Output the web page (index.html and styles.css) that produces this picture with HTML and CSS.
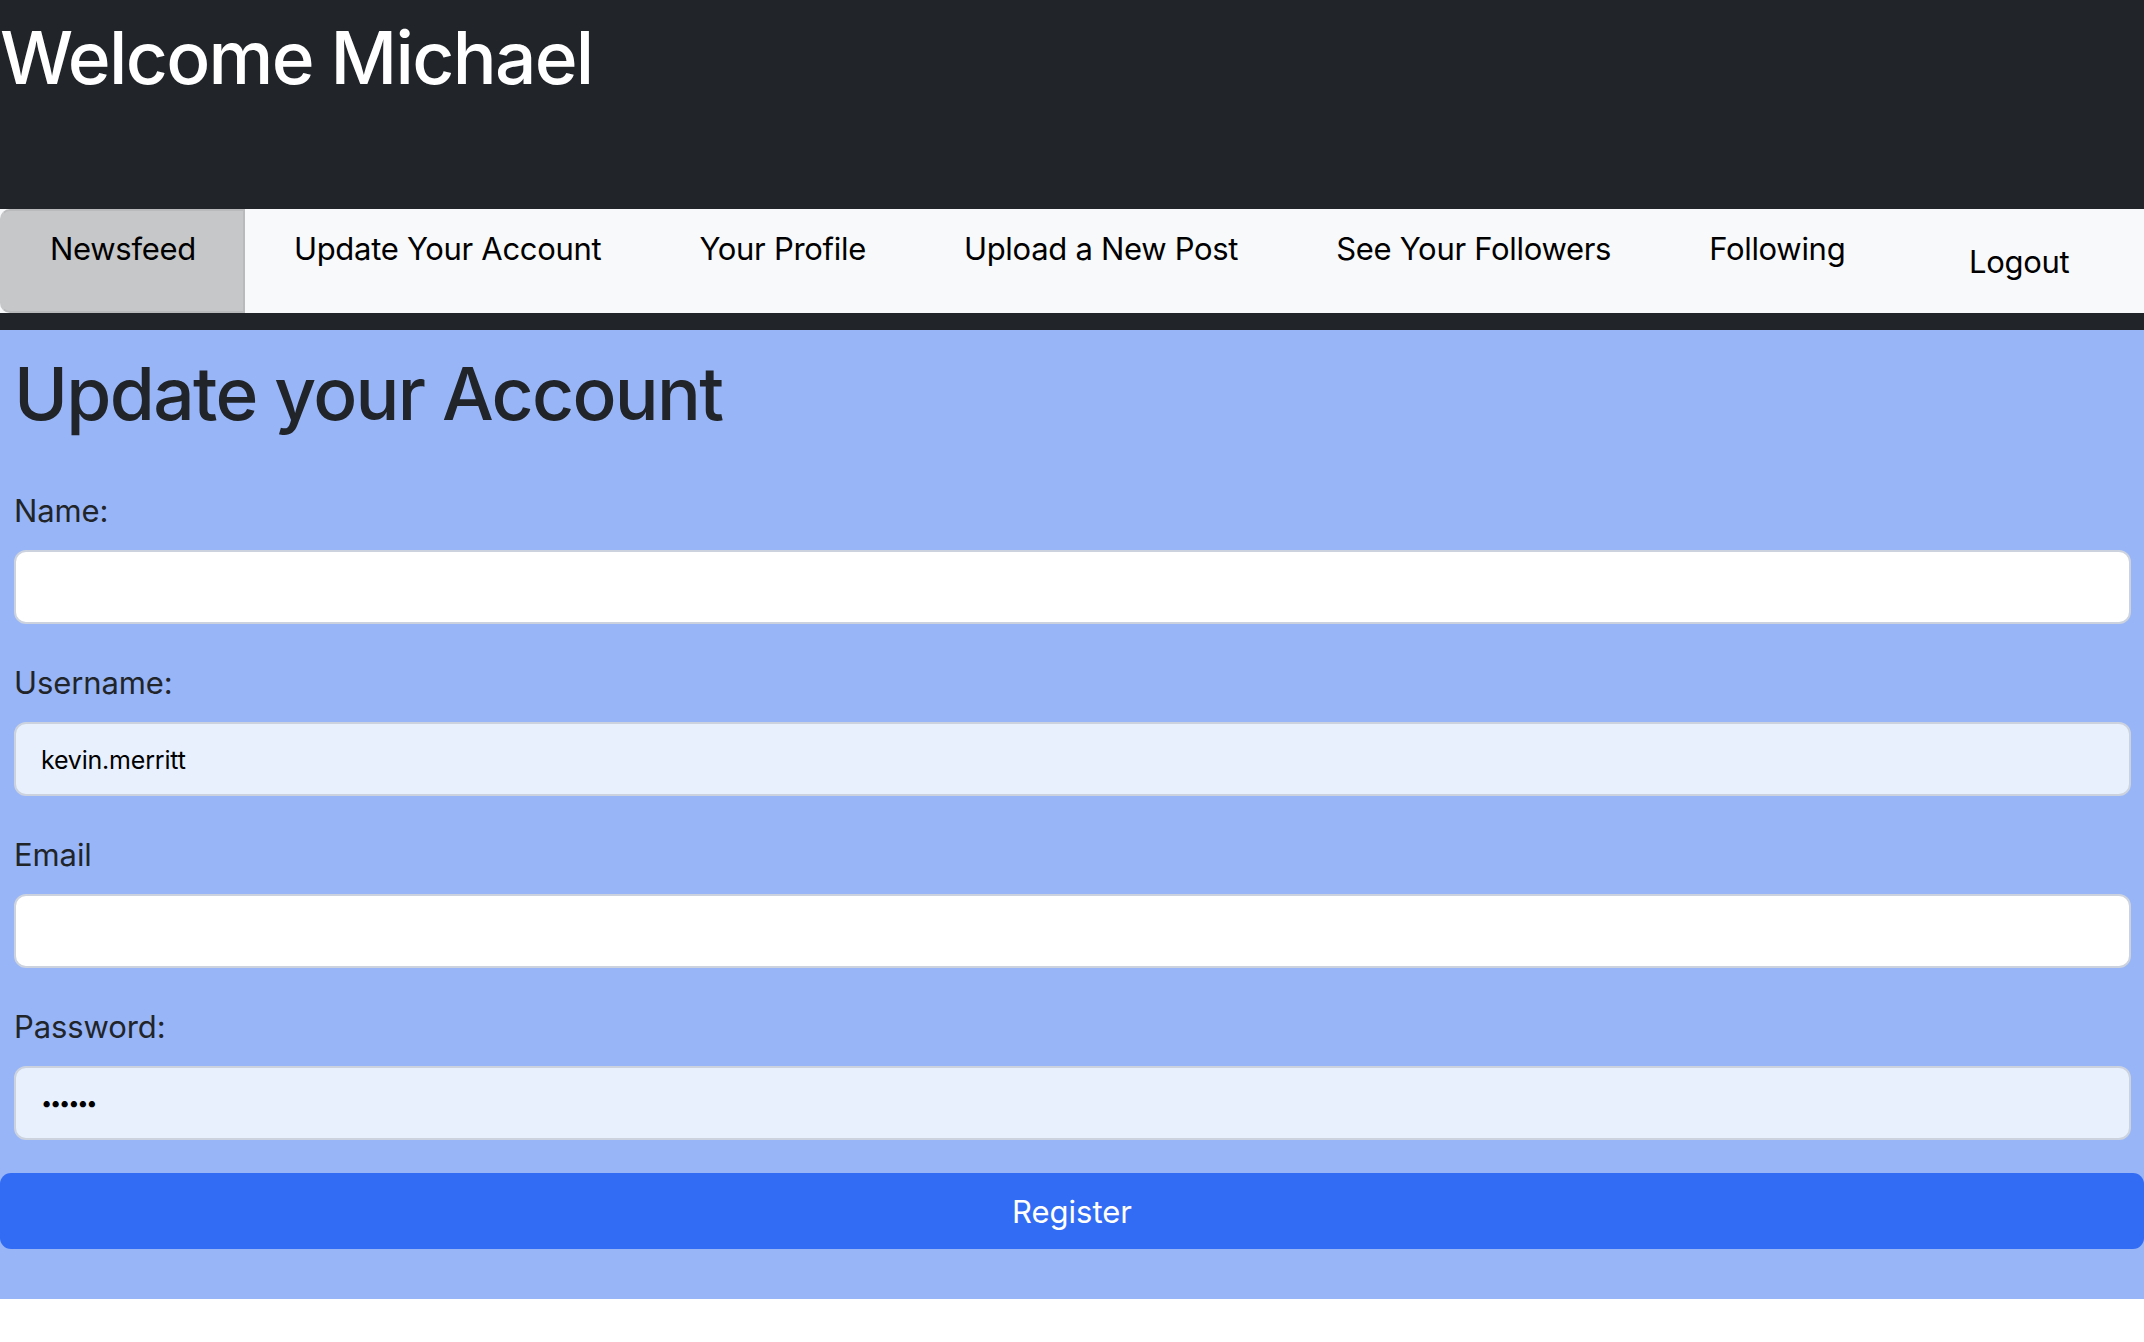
FILE: index.html
```html
<!DOCTYPE html>
<html lang="en">
<head>
<meta charset="utf-8">
<title>Update your Account</title>
<link rel="stylesheet" href="styles.css">
</head>
<body>
<div class="masthead">
  <header class="top">
    <h1 class="welcome">Welcome Michael</h1>
  </header>
  <nav class="nav">
    <a class="nav-item active" href="#">Newsfeed</a>
    <a class="nav-item" href="#">Update Your Account</a>
    <a class="nav-item" href="#">Your Profile</a>
    <a class="nav-item" href="#">Upload a New Post</a>
    <a class="nav-item" href="#">See Your Followers</a>
    <a class="nav-item" href="#">Following</a>
    <a class="nav-item logout" href="#">Logout</a>
  </nav>
</div>
<main class="panel">
  <h1 class="title">Update your Account</h1>
  <form class="fields">
    <div class="group">
      <label class="label" for="name">Name:</label>
      <input class="field" id="name" type="text" value="">
    </div>
    <div class="group">
      <label class="label" for="username">Username:</label>
      <input class="field filled" id="username" type="text" value="kevin.merritt">
    </div>
    <div class="group">
      <label class="label" for="email">Email</label>
      <input class="field" id="email" type="text" value="">
    </div>
    <div class="group last">
      <label class="label" for="password">Password:</label>
      <div class="field filled pw"><span class="dots">&#8226;&#8226;&#8226;&#8226;&#8226;&#8226;</span></div>
    </div>
  </form>
  <button class="register" type="button">Register</button>
</main>
</body>
</html>
```

FILE: styles.css
```css
html, body {
  margin: 0;
  padding: 0;
  background: #ffffff;
  font-family: Inter, "Liberation Sans", sans-serif;
}

.masthead {
  background: #212529;
  padding-bottom: 17px;
}

.top {
  height: 209px;
  box-sizing: border-box;
  padding-top: 13px;
}

.welcome {
  margin: 0;
  color: #ffffff;
  font-size: 73px;
  font-weight: 500;
  line-height: 90px;
  letter-spacing: -1.7px;
}

.nav {
  display: flex;
  height: 104px;
  background: #f8f9fa;
}

.nav-item {
  display: block;
  box-sizing: border-box;
  height: 104px;
  padding: 17px 49px 0;
  color: #000000;
  text-decoration: none;
  font-size: 31px;
  line-height: 45px;
  letter-spacing: -0.3px;
  white-space: nowrap;
}

.nav-item.active {
  background: #c6c7c8;
  border: 2px solid #b9babb;
  border-left-color: #c6c7c8;
  border-radius: 10px 0 0 10px;
  padding-top: 15px;
  padding-left: 48px;
  padding-right: 47px;
}

.nav-item.logout {
  flex: 1;
  text-align: center;
  padding: 30px 0 0;
}

.panel {
  background: #98b5f8;
  padding: 19px 0 50px;
}

.title {
  margin: 0 0 49px;
  padding: 0 14px;
  color: #212529;
  font-size: 73px;
  font-weight: 500;
  line-height: 90px;
  letter-spacing: -1.7px;
}

.fields {
  margin: 0;
  padding: 0 13px 0 14px;
}

.group {
  margin-bottom: 36px;
}

.group.last {
  margin-bottom: 33px;
}

.label {
  display: block;
  margin-bottom: 17px;
  color: #212529;
  font-size: 31px;
  line-height: 45px;
  letter-spacing: -0.1px;
}

.field {
  display: block;
  box-sizing: border-box;
  width: 100%;
  height: 74px;
  margin: 0;
  padding: 2px 25px 0;
  border: 2px solid #ccd3df;
  border-radius: 12px;
  background: #ffffff;
  color: #000000;
  font-family: Inter, "Liberation Sans", sans-serif;
  font-size: 25px;
  letter-spacing: -0.2px;
  outline: none;
}

.field.filled {
  background: #e8f0fe;
}

.pw {
  display: flex;
  align-items: center;
  padding-top: 0;
}

.dots {
  font-size: 20px;
  letter-spacing: -2.2px;
  line-height: 1;
  color: #000000;
}

.register {
  display: block;
  width: 100%;
  height: 76px;
  margin: 0;
  border: none;
  border-radius: 11px;
  background: #336cf4;
  color: #ffffff;
  font-family: Inter, "Liberation Sans", sans-serif;
  font-size: 31px;
  letter-spacing: 0;
  cursor: pointer;
}
```
